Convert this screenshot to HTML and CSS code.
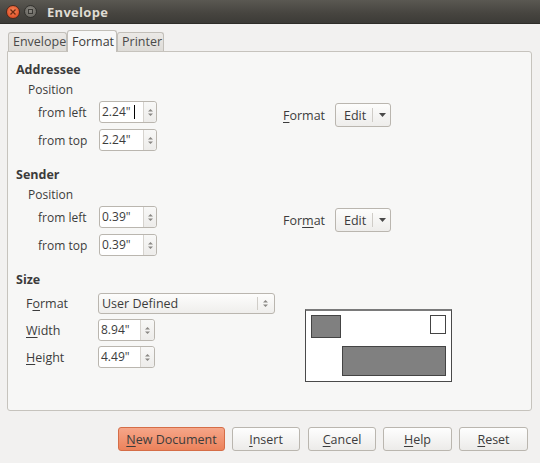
FILE: index.html
```html
<!DOCTYPE html>
<html>
<head>
<meta charset="utf-8">
<link rel="stylesheet" href="styles.css">
</head>
<body>
<div class="window">
  <div class="titlebar">
    <span class="tb-close"><svg width="8" height="8" viewBox="0 0 8 8"><path d="M1.5 1.5 L6.5 6.5 M6.5 1.5 L1.5 6.5" stroke="#6b2a12" stroke-width="1.3"/></svg></span>
    <span class="tb-min"><span class="tb-min-in"></span></span>
    <span class="tb-title">Envelope</span>
  </div>

  <div class="tabs">
    <div class="tab">Envelope</div>
    <div class="tab active">Format</div>
    <div class="tab">Printer</div>
  </div>

  <div class="panel">
    <section class="sect">
      <div class="left">
        <div class="heading">Addressee</div>
        <div class="sub">Position</div>
        <div class="row first"><span class="lbl">from left</span>
          <span class="spin"><span class="field">2.24"<span class="caret"></span></span><span class="arrows"><svg width="5" height="9" viewBox="0 0 5 9"><path d="M0 3.5 L2.5 1 L5 3.5Z M0 5.5 L2.5 8 L5 5.5Z" fill="#8a8884"/></svg></span></span>
        </div>
        <div class="row"><span class="lbl">from top</span>
          <span class="spin"><span class="field">2.24"</span><span class="arrows"><svg width="5" height="9" viewBox="0 0 5 9"><path d="M0 3.5 L2.5 1 L5 3.5Z M0 5.5 L2.5 8 L5 5.5Z" fill="#8a8884"/></svg></span></span>
        </div>
      </div>
      <div class="right">
        <span class="flabel"><u>F</u>ormat</span>
        <span class="editbtn"><span class="edit-txt">Edit</span><span class="edit-sep"></span><svg width="7" height="4" viewBox="0 0 7 4"><path d="M0 0 L7 0 L3.5 4Z" fill="#4a4a4a"/></svg></span>
      </div>
    </section>

    <section class="sect">
      <div class="left">
        <div class="heading">Sender</div>
        <div class="sub">Position</div>
        <div class="row first"><span class="lbl">from left</span>
          <span class="spin"><span class="field">0.39"</span><span class="arrows"><svg width="5" height="9" viewBox="0 0 5 9"><path d="M0 3.5 L2.5 1 L5 3.5Z M0 5.5 L2.5 8 L5 5.5Z" fill="#8a8884"/></svg></span></span>
        </div>
        <div class="row"><span class="lbl">from top</span>
          <span class="spin"><span class="field">0.39"</span><span class="arrows"><svg width="5" height="9" viewBox="0 0 5 9"><path d="M0 3.5 L2.5 1 L5 3.5Z M0 5.5 L2.5 8 L5 5.5Z" fill="#8a8884"/></svg></span></span>
        </div>
      </div>
      <div class="right">
        <span class="flabel">For<u>m</u>at</span>
        <span class="editbtn"><span class="edit-txt">Edit</span><span class="edit-sep"></span><svg width="7" height="4" viewBox="0 0 7 4"><path d="M0 0 L7 0 L3.5 4Z" fill="#4a4a4a"/></svg></span>
      </div>
    </section>

    <section class="sect size">
      <div class="left">
        <div class="heading">Size</div>
        <div class="srow sel-row"><span class="slbl">F<u>o</u>rmat</span>
          <span class="select"><span class="sel-txt">User Defined</span><span class="sel-sep"></span><svg width="5" height="9" viewBox="0 0 5 9"><path d="M0 3.5 L2.5 1 L5 3.5Z M0 5.5 L2.5 8 L5 5.5Z" fill="#8a8884"/></svg></span>
        </div>
        <div class="srow"><span class="slbl"><u>W</u>idth</span>
          <span class="spin s2"><span class="field">8.94"</span><span class="arrows"><svg width="5" height="9" viewBox="0 0 5 9"><path d="M0 3.5 L2.5 1 L5 3.5Z M0 5.5 L2.5 8 L5 5.5Z" fill="#8a8884"/></svg></span></span>
        </div>
        <div class="srow"><span class="slbl"><u>H</u>eight</span>
          <span class="spin s2"><span class="field">4.49"</span><span class="arrows"><svg width="5" height="9" viewBox="0 0 5 9"><path d="M0 3.5 L2.5 1 L5 3.5Z M0 5.5 L2.5 8 L5 5.5Z" fill="#8a8884"/></svg></span></span>
        </div>
      </div>
      <div class="preview">
        <div class="envelope">
          <div class="env-sender"></div>
          <div class="env-stamp"></div>
          <div class="env-addr"></div>
        </div>
      </div>
    </section>
  </div>

  <div class="buttons">
    <span class="btn primary w107"><u>N</u>ew Document</span>
    <span class="btn w68"><u>I</u>nsert</span>
    <span class="btn w68 g8"><u>C</u>ancel</span>
    <span class="btn w69"><u>H</u>elp</span>
    <span class="btn w69"><u>R</u>eset</span>
  </div>
</div>
</body>
</html>
```

FILE: styles.css
```css
* { box-sizing: border-box; }
html, body {
  margin: 0;
  padding: 0;
}
body {
  width: 540px;
  height: 463px;
  overflow: hidden;
  background: #f2f1f0;
  font-family: "Open Sans", "Noto Sans", "DejaVu Sans", sans-serif;
  font-size: 12px;
  color: #3c3c3c;
}
u { text-decoration: underline; text-underline-offset: 2px; }

.window { width: 540px; height: 463px; }

/* title bar */
.titlebar {
  height: 24px;
  background: linear-gradient(#5a5852, #46443f 60%, #3c3b37);
  border-bottom: 1px solid #2e2d29;
  display: flex;
  align-items: center;
  padding-left: 6px;
}
.tb-close {
  width: 14px; height: 14px;
  border-radius: 50%;
  background: radial-gradient(circle at 50% 40%, #f58a5c, #e2532a 70%, #b7401d);
  border: 1px solid #4a2a1e;
  display: flex; align-items: center; justify-content: center;
}
.tb-min {
  width: 13px; height: 13px;
  margin-left: 4px;
  border-radius: 50%;
  background: radial-gradient(circle at 50% 40%, #8a8882, #5f5d57);
  border: 1px solid #33322e;
  display: flex; align-items: center; justify-content: center;
}
.tb-min-in {
  width: 5px; height: 5px;
  border: 1px solid #3a3935;
}
.tb-title {
  margin-left: 10px;
  font-weight: bold;
  font-size: 13px;
  color: #dfdbd2;
  letter-spacing: 0.3px;
}

/* tabs */
.tabs {
  display: flex;
  align-items: flex-end;
  height: 21px;
  margin-top: 6px;
  padding-left: 8px;
  position: relative;
  z-index: 1;
}
.tab {
  height: 19px;
  padding: 0 4px;
  line-height: 18px;
  font-size: 12.5px;
  color: #4a4a4a;
  background: linear-gradient(#ebe9e6, #dedcd8);
  border: 1px solid #c2bfb9;
  border-bottom: none;
  border-radius: 3px 3px 0 0;
}
.tab:first-child { width: 59px; }
.tab.active {
  width: 50px;
  height: 22px;
  line-height: 22px;
  background: #f7f7f7;
  color: #3c3c3c;
  margin-bottom: -1px;
  border-color: #c2bfb9;
}
.tab:last-child { width: 47px; }

/* panel */
.panel {
  margin: 0 8px 0 7px;
  height: 360px;
  background: #f7f7f6;
  border: 1px solid #c6c3bd;
  border-radius: 0 3px 3px 3px;
  padding-top: 8px;
}

.sect { display: flex; }
.sect + .sect { margin-top: 14px; }
.left { width: 275px; }
.heading {
  height: 20px;
  line-height: 20px;
  padding-left: 8px;
  font-weight: bold;
  font-size: 12.5px;
}
.sub {
  height: 20px;
  line-height: 20px;
  padding-left: 20px;
}
.row {
  display: flex;
  align-items: center;
  height: 22px;
  margin-top: 6px;
  padding-left: 30px;
}
.row.first { margin-top: 1px; }
.lbl { width: 61px; }

.spin {
  display: flex;
  height: 22px;
  border: 1px solid #bab6af;
  border-radius: 3px;
  background: #fff;
}
.field {
  width: 44px;
  padding-left: 2px;
  line-height: 20px;
  border-right: 1px solid #d6d3ce;
  display: flex;
  align-items: center;
}
.caret {
  display: inline-block;
  width: 1px;
  height: 14px;
  background: #000;
  margin-left: 3px;
}
.arrows {
  width: 12px;
  background: linear-gradient(#f8f8f7, #edecea);
  border-radius: 0 3px 3px 0;
  display: flex;
  align-items: center;
  justify-content: center;
}
.spin.s2 .field { width: 42px; }
.spin.s2 .arrows { width: 13px; }

.right {
  display: flex;
  align-items: center;
  margin-top: 43px;
  height: 24px;
}
.flabel { width: 52px; font-size: 12.5px; }
.editbtn {
  width: 56px;
  height: 24px;
  display: flex;
  align-items: center;
  border: 1px solid #bab6af;
  border-radius: 3px;
  background: linear-gradient(#fdfdfc, #eeedeb);
  padding-left: 8px;
}
.edit-txt { width: 28px; font-size: 12.5px; }
.edit-sep {
  width: 1px; height: 14px;
  background: #cfccc7;
  margin-right: 6px;
}

/* size section */
.srow {
  display: flex;
  align-items: center;
  height: 22px;
  margin-top: 5px;
  padding-left: 18px;
}
.sel-row { margin-top: 2px; }
.slbl { width: 72px; font-size: 12.5px; }
.select {
  width: 177px;
  height: 21px;
  display: flex;
  align-items: center;
  border: 1px solid #bab6af;
  border-radius: 3px;
  background: linear-gradient(#fdfdfc, #efeeec);
  padding-left: 3px;
  font-size: 12.5px;
}
.sel-txt { flex: 1; }
.sel-sep {
  width: 1px; height: 13px;
  background: #d0cdc8;
  margin-right: 5px;
}
.select svg { margin-right: 6px; }

.preview {
  margin-left: 22px;
  margin-top: 39px;
}
.envelope {
  position: relative;
  width: 147px;
  height: 73px;
  background: #fff;
  border: 1px solid #4a4a4a;
  border-top: 2px solid #7a7a7a;
}
.env-sender {
  position: absolute;
  left: 5px; top: 4px;
  width: 30px; height: 23px;
  background: #808080;
  border: 1px solid #444;
}
.env-stamp {
  position: absolute;
  left: 124px; top: 4px;
  width: 16px; height: 19px;
  background: #fff;
  border: 1px solid #444;
}
.env-addr {
  position: absolute;
  left: 36px; top: 35px;
  width: 104px; height: 30px;
  background: #808080;
  border: 1px solid #444;
}

/* buttons */
.buttons {
  display: flex;
  justify-content: flex-end;
  gap: 7px;
  margin-top: 16px;
  padding-right: 12px;
}
.btn {
  height: 24px;
  display: flex;
  align-items: center;
  justify-content: center;
  border: 1px solid #bab6af;
  border-radius: 3px;
  background: linear-gradient(#fefefe, #ecebe9);
  font-size: 12.5px;
  color: #3c3c3c;
}
.btn.primary {
  background: linear-gradient(#f6a689, #ec825b);
  border-color: #d56d47;
}
.w107 { width: 107px; }
.w68 { width: 68px; }
.w69 { width: 69px; }
.g8 { margin-left: 1px; }
```
